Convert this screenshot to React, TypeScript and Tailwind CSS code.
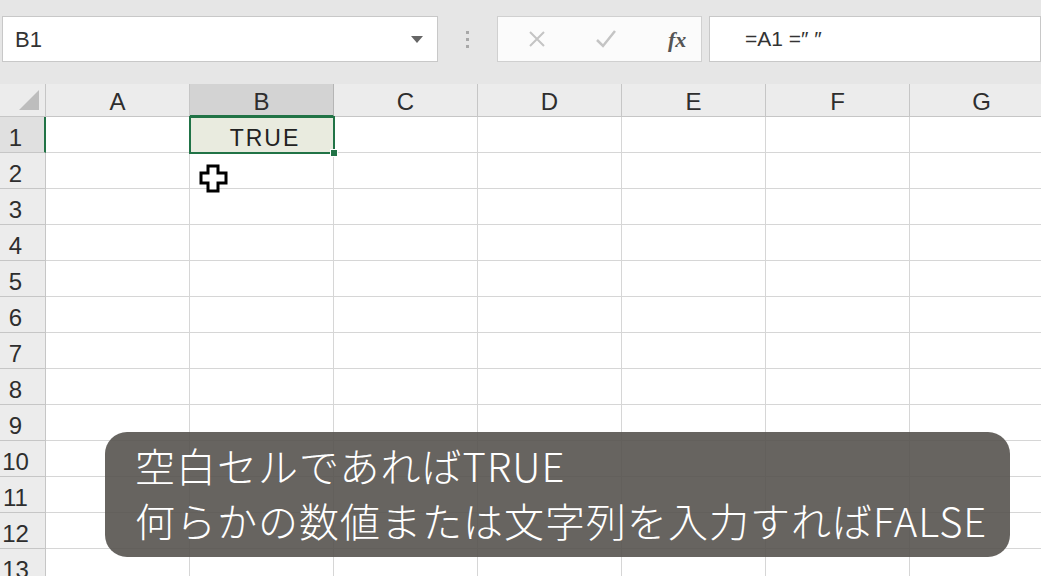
import { Fragment } from "react";

const cols = ["A", "B", "C", "D", "E", "F", "G"];
const rows = Array.from({ length: 13 }, (_, i) => i + 1);

export default function App() {
  return (
    <div
      className="w-[1041px] h-[576px] overflow-hidden bg-white relative"
      style={{ fontFamily: '"Liberation Sans", Arial, sans-serif' }}
    >
      {/* Formula bar */}
      <div className="h-[84px] bg-[#e6e6e6] flex items-start pt-[16px] pl-[2px]">
        <div className="w-[436px] h-[46px] bg-white border border-[#c8c8c8] flex items-center pl-[12px] pr-[14px]">
          <span className="text-[22px] text-[#333] flex-1">B1</span>
          <span className="w-0 h-0 border-l-[6px] border-r-[6px] border-t-[7px] border-l-transparent border-r-transparent border-t-[#666]" />
        </div>
        <div className="w-[59px] h-[46px] flex flex-col items-center justify-center gap-[4px]">
          <span className="w-[3px] h-[3px] bg-[#a8a8a8]" />
          <span className="w-[3px] h-[3px] bg-[#a8a8a8]" />
          <span className="w-[3px] h-[3px] bg-[#a8a8a8]" />
        </div>
        <div className="w-[205px] h-[46px] bg-[#fbfbfb] border border-[#d0d0d0] flex items-center">
          <svg width="68" height="46" viewBox="0 0 68 46" className="shrink-0">
            <path d="M32 16 L46 30 M46 16 L32 30" stroke="#c4c4c4" strokeWidth="2" />
          </svg>
          <svg width="72" height="46" viewBox="0 0 72 46" className="shrink-0">
            <path d="M31 24 L37 30 L49 15" stroke="#c4c4c4" strokeWidth="2.5" fill="none" />
          </svg>
          <span
            className="text-[22px] italic font-bold text-[#555] ml-[30px]"
            style={{ fontFamily: '"Liberation Serif", serif' }}
          >
            fx
          </span>
        </div>
        <div className="ml-[7px] flex-1 h-[46px] bg-white border border-[#c8c8c8] flex items-center pl-[35px]">
          <span className="text-[21px] text-[#333]">=A1 =″ ″</span>
        </div>
      </div>

      {/* Grid */}
      <div className="grid grid-cols-[46px_repeat(7,144px)] grid-rows-[33px_repeat(13,36px)]">
        <div className="bg-[#ececec] border-r border-b border-[#c6c6c6] flex items-end justify-end pr-[6px] pb-[6px]">
          <span className="w-0 h-0 border-b-[20px] border-l-[20px] border-l-transparent border-b-[#bdbdbd]" />
        </div>
        {cols.map((c) => (
          <div
            key={c}
            className={
              c === "B"
                ? "bg-[#d3d3d3] border-r border-[#b5b5b5] border-b-2 border-b-[#217346] flex items-center justify-center pt-[4px] text-[24px] text-[#2e2e2e]"
                : "bg-[#ececec] border-r border-b border-[#c6c6c6] flex items-center justify-center pt-[4px] text-[24px] text-[#2e2e2e]"
            }
          >
            {c}
          </div>
        ))}
        {rows.map((r) => (
          <Fragment key={r}>
            <div
              className={
                r === 1
                  ? "bg-[#e0e0e0] border-r-2 border-r-[#217346] border-b border-b-[#c6c6c6] flex items-center pt-[6px] text-[24px] text-[#2e2e2e]"
                  : "bg-[#ececec] border-r border-b border-[#c6c6c6] flex items-center pt-[6px] text-[24px] text-[#2e2e2e]"
              }
            >
              <span className="w-[31px] text-center">{r}</span>
            </div>
            {cols.map((c) =>
              r === 1 && c === "B" ? (
                <div
                  key={c}
                  className="relative -ml-[1px] -mt-[1px] w-[146px] h-[38px] border-2 border-[#217346] bg-[#e9ebdf] flex items-center justify-center pt-[6px] pl-[6px] text-[23px] tracking-[2px] text-[#222] z-10"
                >
                  TRUE
                  <span className="absolute -right-[5px] -bottom-[5px] w-[8px] h-[8px] bg-[#217346] border border-white" />
                </div>
              ) : (
                <div key={c} className="border-r border-b border-[#d6d6d6]" />
              )
            )}
          </Fragment>
        ))}
      </div>

      {/* Cell cursor */}
      <svg width="30" height="30" viewBox="0 0 30 30" className="absolute left-[199px] top-[164px]">
        <path
          d="M9 2 H19 V9 H27 V19 H19 V27 H9 V19 H2 V9 H9 Z"
          fill="white"
          stroke="black"
          strokeWidth="3"
        />
      </svg>

      {/* Caption overlay */}
      <div
        className="absolute left-[105px] top-[432px] w-[905px] h-[125px] rounded-[22px] bg-[#57534f]/90 text-white font-light text-[40px] tracking-[1px] leading-[55px] pl-[30px] pt-[6px]"
        style={{ fontFamily: '"Noto Sans CJK JP", "Noto Sans", sans-serif' }}
      >
        <div>空白セルであればTRUE</div>
        <div>何らかの数値または文字列を入力すればFALSE</div>
      </div>
    </div>
  );
}
